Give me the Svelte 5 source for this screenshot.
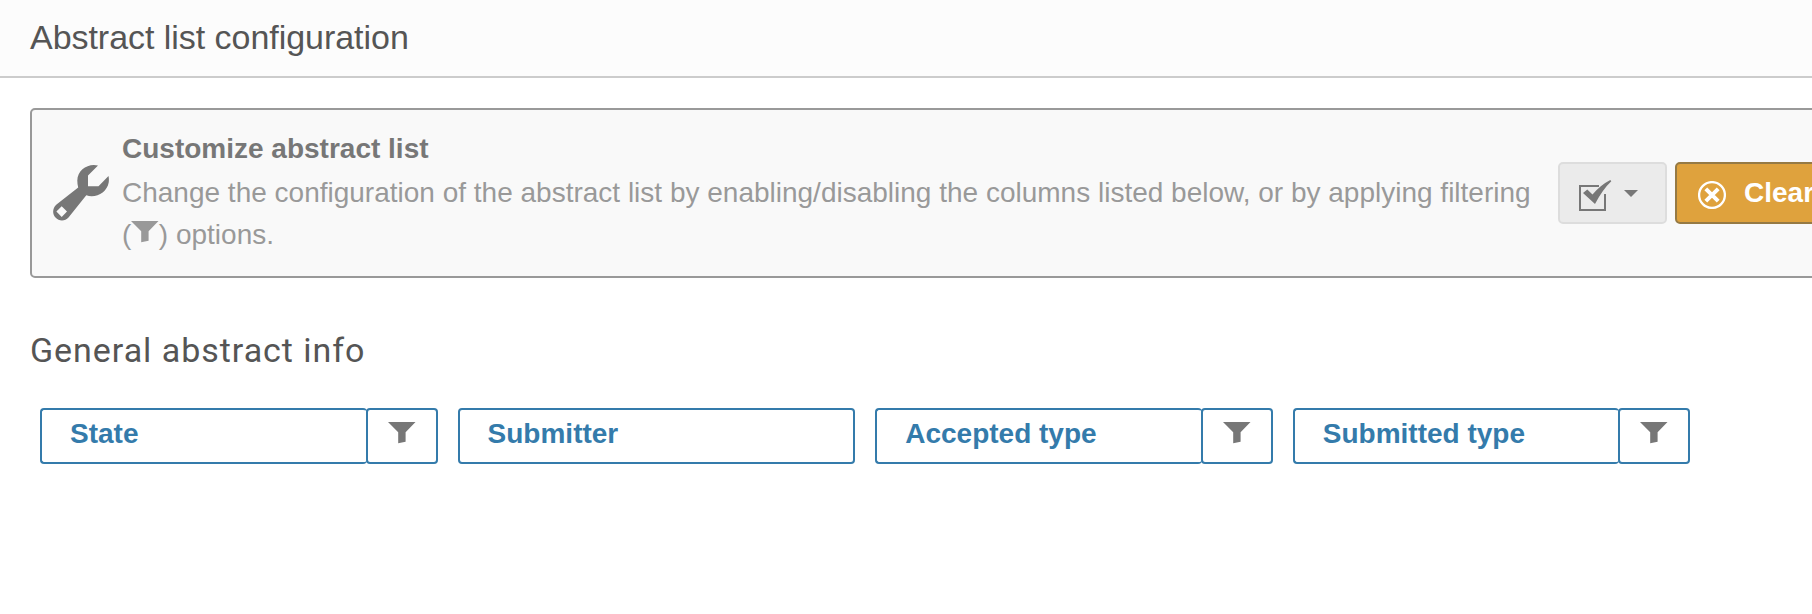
<script>
  const columns = [
    { label: 'State', filter: true },
    { label: 'Submitter', filter: false },
    { label: 'Accepted type', filter: true },
    { label: 'Submitted type', filter: true }
  ];
</script>

{#snippet funnel()}
  <svg class="funnel" viewBox="0 0 28 22" width="28" height="22">
    <path d="M0 0H27.500L17.600 10.300V19.800L10.200 21.300V10.300Z" fill="currentColor" />
  </svg>
{/snippet}

<div class="dialog">
  <header><h1>Abstract list configuration</h1></header>
  <main>
    <section class="action-box">
      <svg class="wrench" viewBox="0 0 58 58" width="58" height="58">
        <path
          fill="currentColor"
          fill-rule="evenodd"
          d="M46 1.500C36 -1 25.500 6 25.300 16.500Q25.300 20 26.200 23.500L4.500 40.500C.5 44 0 50 3.500 53.500C7 57.500 13 57.500 16.500 53.500L34.300 31.300C44 34.500 55 28.500 56.700 18.500Q57.200 15 56.500 12L46.500 22.300H36V11.500ZM9.700 42.300L15 47.600L9.700 52.900L4.400 47.600Z"
        />
      </svg>
      <div class="text">
        <strong>Customize abstract list</strong>
        <p>
          Change the configuration of the abstract list by enabling/disabling the columns listed
          below, or by applying filtering ({@render funnel()}) options.
        </p>
      </div>
      <div class="toolbar">
        <button class="select" aria-label="Select">
          <svg viewBox="0 0 32 32" width="32" height="32" fill="none">
            <path d="M20 6H1V30H26V14" stroke="#777" stroke-width="2" />
            <path d="M20 9L22 7H27V13L22 16Z" fill="#ebebeb" />
            <path d="M4 13L8.300 9.500L13.500 14.500Q21.500 5 31.300 0L32.300 1.200Q23.500 9.500 16 24Z" fill="#777" />
          </svg>
          <i class="caret"></i>
        </button>
        <button class="clear">
          <svg viewBox="0 0 28 28" width="28" height="28" fill="none" stroke="#fff">
            <circle cx="14" cy="14" r="12.900" stroke-width="2.300" />
            <path d="M7.800 7.800L20.200 20.200M20.200 7.800L7.800 20.200" stroke-width="4" />
          </svg>
          <span>Clear</span>
        </button>
      </div>
    </section>

    <h2>General abstract info</h2>
    <div class="columns">
      {#each columns as column}
        <div class="column">
          <div class="name" class:joined={column.filter}>{column.label}</div>
          {#if column.filter}
            <div class="filter">{@render funnel()}</div>
          {/if}
        </div>
      {/each}
    </div>
  </main>
</div>

<style>
  :global(body) {
    background: #fff;
    overflow: hidden;
  }
  .dialog {
    width: 1812px;
    height: 614px;
    overflow: hidden;
    font: 28px/42px 'Liberation Sans', Arial, sans-serif;
  }
  header {
    box-sizing: border-box;
    height: 78px;
    padding: 17px 30px 0;
    background: #fcfcfc;
    border-bottom: 2px solid #ccc;
  }
  h1 {
    margin: 0;
    font-size: 34px;
    line-height: 40px;
    letter-spacing: -0.040px;
    font-weight: 400;
    color: #555;
  }
  main {
    padding: 30px 0 0 30px;
  }
  .action-box {
    box-sizing: border-box;
    width: 1900px;
    height: 170px;
    display: flex;
    align-items: flex-start;
    border: 2px solid #999;
    border-radius: 5px;
    background: #f9f9f9;
    padding-left: 20px;
  }
  .wrench {
    flex: none;
    margin-top: 54px;
    margin-right: 12px;
    color: #777;
  }
  .text {
    flex: none;
    width: 1412px;
    padding-top: 17px;
    color: #999;
  }
  strong {
    display: block;
    line-height: 44px;
    color: #777;
  }
  p {
    margin: 1px 0 0;
  }
  p .funnel {
    vertical-align: 1px;
    margin-right: -0.500px;
  }
  .toolbar {
    display: flex;
    gap: 8px;
    margin: 52px 0 0 24px;
  }
  button {
    box-sizing: border-box;
    height: 62px;
    display: flex;
    align-items: center;
    border-radius: 5px;
    padding: 0;
    font: inherit;
  }
  .select {
    width: 109px;
    padding-left: 19px;
    background: #ebebeb;
    border: 2px solid #ddd;
  }
  .select svg {
    margin-top: 6px;
    overflow: visible;
  }
  .caret {
    margin: 0 0 0 13px;
    border: 7px solid transparent;
    border-top-color: #777;
    border-bottom: 0;
  }
  .clear {
    width: 200px;
    padding-left: 21px;
    background: #dfa23d;
    border: 2px solid #967a44;
    color: #fff;
    font-weight: 700;
  }
  .clear svg {
    margin-top: 4px;
  }
  .clear span {
    margin: 0 0 0 18px;
  }
  h2 {
    margin: 52px 0 0;
    font: 400 34px/40px Roboto, sans-serif;
    letter-spacing: 0.960px;
    color: #555;
  }
  .columns {
    display: grid;
    grid-template-columns: repeat(4, 397.600px);
    gap: 20px;
    margin: 38px 0 0 10px;
  }
  .column {
    display: flex;
    height: 56px;
  }
  .name,
  .filter {
    box-sizing: border-box;
    border: 2px solid #347bab;
    border-radius: 4px;
  }
  .name {
    flex: 1;
    padding: 3px 0 0 28px;
    font-weight: 700;
    color: #347bab;
  }
  .joined {
    border-right: 0;
  }
  .filter {
    width: 72px;
    margin-left: -1px;
    display: flex;
    justify-content: center;
    padding-top: 12px;
    color: #777;
  }
</style>
